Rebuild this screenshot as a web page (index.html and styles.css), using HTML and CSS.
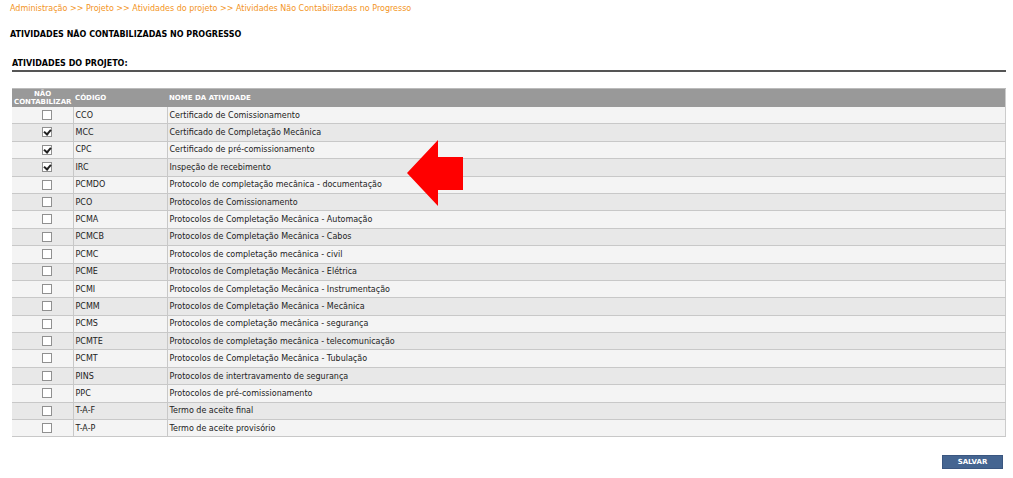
FILE: index.html
```html
<!DOCTYPE html>
<html lang="pt-BR">
<head>
    <meta charset="UTF-8">
    <meta name="viewport" content="width=device-width, initial-scale=1.0">
    <title>Atividades Não Contabilizadas no Progresso</title>
    <link rel="stylesheet" href="styles.css">
</head>
<body>
    <div class="breadcrumb">
        <a href="#">Administração</a> &gt;&gt; <a href="#">Projeto</a> &gt;&gt; <a href="#">Atividades do projeto</a> &gt;&gt; <span>Atividades Não Contabilizadas no Progresso</span>
    </div>

    <h1 class="page-title">ATIVIDADES NÃO CONTABILIZADAS NO PROGRESSO</h1>

    <form>
        <h2 class="section-title">ATIVIDADES DO PROJETO:</h2>

        <table class="grid">
            <thead>
                <tr>
                    <th class="col-check">NÃO<br>CONTABILIZAR</th>
                    <th class="col-code">CÓDIGO</th>
                    <th>NOME DA ATIVIDADE</th>
                </tr>
            </thead>
            <tbody>
                <tr><td class="col-check"><input type="checkbox"></td><td>CCO</td><td>Certificado de Comissionamento</td></tr>
                <tr><td class="col-check"><input type="checkbox" checked></td><td>MCC</td><td>Certificado de Completação Mecânica</td></tr>
                <tr><td class="col-check"><input type="checkbox" checked></td><td>CPC</td><td>Certificado de pré-comissionamento</td></tr>
                <tr><td class="col-check"><input type="checkbox" checked></td><td>IRC</td><td>Inspeção de recebimento</td></tr>
                <tr><td class="col-check"><input type="checkbox"></td><td>PCMDO</td><td>Protocolo de completação mecânica - documentação</td></tr>
                <tr><td class="col-check"><input type="checkbox"></td><td>PCO</td><td>Protocolos de Comissionamento</td></tr>
                <tr><td class="col-check"><input type="checkbox"></td><td>PCMA</td><td>Protocolos de Completação Mecânica - Automação</td></tr>
                <tr><td class="col-check"><input type="checkbox"></td><td>PCMCB</td><td>Protocolos de Completação Mecânica - Cabos</td></tr>
                <tr><td class="col-check"><input type="checkbox"></td><td>PCMC</td><td>Protocolos de completação mecânica - civil</td></tr>
                <tr><td class="col-check"><input type="checkbox"></td><td>PCME</td><td>Protocolos de Completação Mecânica - Elétrica</td></tr>
                <tr><td class="col-check"><input type="checkbox"></td><td>PCMI</td><td>Protocolos de Completação Mecânica - Instrumentação</td></tr>
                <tr><td class="col-check"><input type="checkbox"></td><td>PCMM</td><td>Protocolos de Completação Mecânica - Mecânica</td></tr>
                <tr><td class="col-check"><input type="checkbox"></td><td>PCMS</td><td>Protocolos de completação mecânica - segurança</td></tr>
                <tr><td class="col-check"><input type="checkbox"></td><td>PCMTE</td><td>Protocolos de completação mecânica - telecomunicação</td></tr>
                <tr><td class="col-check"><input type="checkbox"></td><td>PCMT</td><td>Protocolos de Completação Mecânica - Tubulação</td></tr>
                <tr><td class="col-check"><input type="checkbox"></td><td>PINS</td><td>Protocolos de intertravamento de segurança</td></tr>
                <tr><td class="col-check"><input type="checkbox"></td><td>PPC</td><td>Protocolos de pré-comissionamento</td></tr>
                <tr><td class="col-check"><input type="checkbox"></td><td>T-A-F</td><td>Termo de aceite final</td></tr>
                <tr><td class="col-check"><input type="checkbox"></td><td>T-A-P</td><td>Termo de aceite provisório</td></tr>
            </tbody>
        </table>

        <div class="buttons">
            <button type="button">SALVAR</button>
        </div>
    </form>

    <!-- seta de destaque -->
    <svg class="arrow" width="60" height="70" viewBox="0 0 60 70">
        <polygon points="0,33 31,0 31,17 56,17 56,50 31,50 31,66" fill="#ff0000"/>
    </svg>
</body>
</html>
```

FILE: styles.css
```css
/* Estilos da página */
body {
    margin: 0;
    font-family: "DejaVu Sans", Verdana, sans-serif;
    font-size: 8px;
    color: #222;
    background: #fff;
}

.breadcrumb {
    height: 18px;
    line-height: 18px;
    padding-left: 10px;
    color: #f39424;
}

.breadcrumb a {
    color: #f39424;
    text-decoration: none;
}

.page-title {
    margin: 8px 0 0 10px;
    font-size: 8px;
    line-height: 18px;
    color: #000;
}

form {
    margin: 0 7px 0 12px;
}

.section-title {
    margin: 14px 0 0;
    font-size: 8px;
    line-height: 12px;
    color: #000;
    border-bottom: 2px solid #555;
}

.grid {
    width: 100%;
    margin-top: 16px;
    border-collapse: collapse;
    table-layout: fixed;
    border-right: 1px solid #ccc;
}

.grid th {
    height: 18px;
    padding: 0 2px;
    background-color: #999;
    border-top: 1px solid #bbb;
    color: #fff;
    font-size: 7px;
    line-height: 8px;
    text-align: left;
}

.grid th.col-check {
    width: 57px;
    text-align: center;
}

.grid th.col-code {
    width: 90px;
}

.grid td {
    height: 15.4px;
    padding: 1px 2px 0;
    border-bottom: 1px solid #c8c8c8;
    border-left: 1px solid #c8c8c8;
    line-height: 10px;
    color: #222;
}

.grid td.col-check {
    border-left: none;
    padding: 0 0 0 9px;
    text-align: center;
}

.grid tbody tr:nth-child(odd) {
    background-color: #f4f4f4;
}

.grid tbody tr:nth-child(even) {
    background-color: #e8e8e8;
}

input[type="checkbox"] {
    appearance: none;
    -webkit-appearance: none;
    position: relative;
    width: 10px;
    height: 10px;
    margin: 0;
    vertical-align: middle;
    background: #fff;
    border: 1px solid #909090;
}

input[type="checkbox"]:checked::after {
    content: "";
    position: absolute;
    left: 2px;
    top: 0;
    width: 3px;
    height: 5px;
    border: solid #222;
    border-width: 0 2px 2px 0;
    transform: rotate(40deg);
}

.buttons {
    display: flex;
    justify-content: flex-end;
    margin-top: 18px;
    margin-right: 3px;
}

button {
    width: 61px;
    height: 14px;
    padding: 0;
    background-color: #456591;
    border: 1px solid #3a5680;
    color: #fff;
    font-family: "DejaVu Sans", Verdana, sans-serif;
    font-size: 7px;
    font-weight: bold;
    line-height: 12px;
}

.arrow {
    position: absolute;
    left: 407px;
    top: 140px;
}
```
